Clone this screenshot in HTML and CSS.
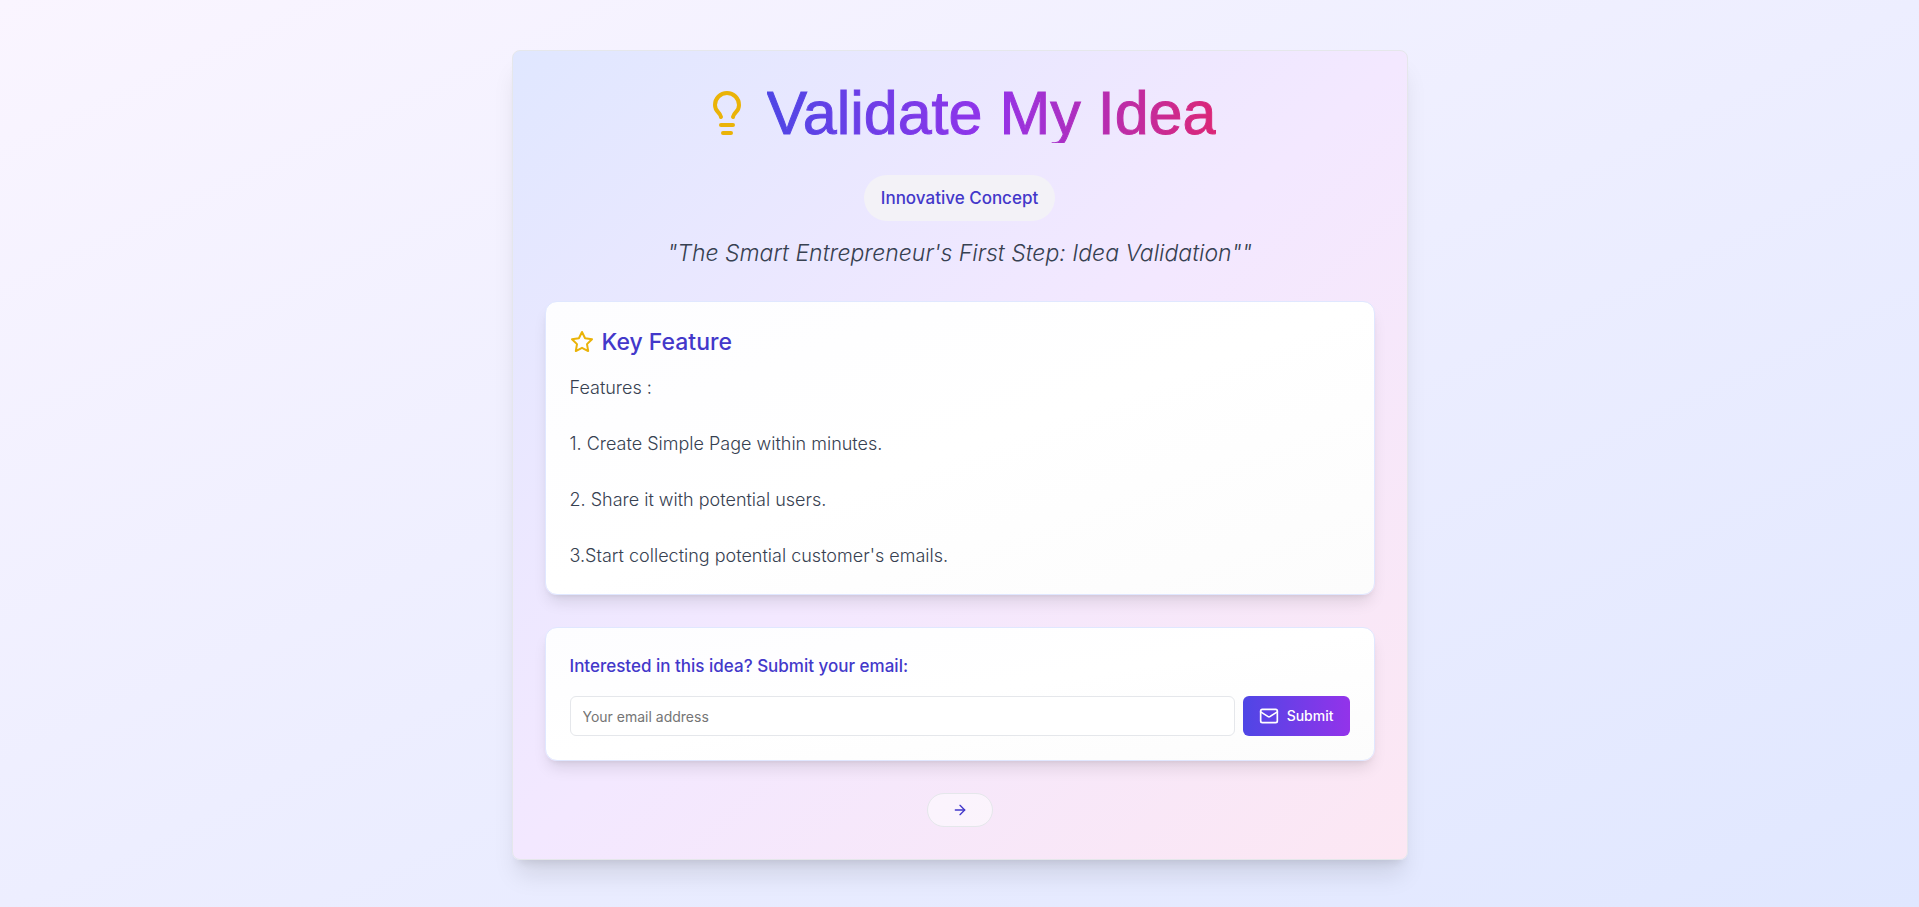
FILE: index.html
```
<!DOCTYPE html>
<html lang="en">
<head>
    <meta charset="UTF-8">
    <meta name="viewport" content="width=device-width, initial-scale=1.0">
    <title>Validate My Idea</title>
    <link rel="stylesheet" href="styles.css">
</head>
<body>
    <main class="card">
        <header class="card-header">
            <div class="title-row">
                <svg class="icon icon-bulb" viewBox="0 0 24 24" aria-hidden="true">
                    <path d="M15 14c.2-1 .7-1.7 1.5-2.5 1-.9 1.5-2.2 1.5-3.5A6 6 0 0 0 6 8c0 1 .2 2.2 1.5 3.5.7.7 1.3 1.5 1.5 2.5"/>
                    <path d="M9 18h6"/>
                    <path d="M10 22h4"/>
                </svg>
                <h1>Validate My Idea</h1>
            </div>
            <span class="badge">Innovative Concept</span>
            <p class="tagline">"The Smart Entrepreneur's First Step: Idea Validation""</p>
        </header>

        <section class="panel">
            <h2>
                <svg class="icon icon-star" viewBox="0 0 24 24" aria-hidden="true">
                    <polygon points="12 2 15.09 8.26 22 9.27 17 14.14 18.18 21.02 12 17.77 5.82 21.02 7 14.14 2 9.27 8.91 8.26 12 2"/>
                </svg>
                Key Feature
            </h2>
            <p class="features">Features :

1. Create Simple Page within minutes.

2. Share it with potential users.

3.Start collecting potential customer's emails.</p>
        </section>

        <form class="panel" id="email-form">
            <label for="email">Interested in this idea? Submit your email:</label>
            <div class="form-row">
                <input type="email" id="email" placeholder="Your email address" required>
                <button type="submit" class="submit-button">
                    <svg class="icon icon-mail" viewBox="0 0 24 24" aria-hidden="true">
                        <rect width="20" height="16" x="2" y="4" rx="2"/>
                        <path d="m22 7-8.97 5.7a1.94 1.94 0 0 1-2.06 0L2 7"/>
                    </svg>
                    Submit
                </button>
            </div>
        </form>

        <button type="button" class="next-button" aria-label="Next">
            <svg class="icon icon-arrow" viewBox="0 0 24 24" aria-hidden="true">
                <path d="M5 12h14"/>
                <path d="m12 5 7 7-7 7"/>
            </svg>
        </button>
    </main>
</body>
</html>
```
FILE: styles.css
```
* {
    box-sizing: border-box;
    margin: 0;
}

body {
    min-height: 100vh;
    padding: 50px 16px 47px;
    font-family: Inter, "Liberation Sans", sans-serif;
    background: linear-gradient(to bottom right, #faf5ff, #e0e7ff);
}

.card {
    display: flex;
    flex-direction: column;
    gap: 32px;
    max-width: 896px;
    margin: 0 auto;
    padding: 32px;
    border: 1px solid #e5e7eb;
    border-radius: 8px;
    background: linear-gradient(to bottom right, #e0e7ff, #f3e8ff, #fce7f3);
    box-shadow: 0 20px 25px -5px rgba(0, 0, 0, 0.1), 0 8px 10px -6px rgba(0, 0, 0, 0.1);
}

.card-header {
    display: flex;
    flex-direction: column;
    align-items: center;
    text-align: center;
}

.title-row {
    display: flex;
    align-items: center;
    gap: 16px;
    margin-bottom: 32px;
}

h1 {
    font-family: "Liberation Sans", Arial, sans-serif;
    font-size: 61px;
    line-height: 60px;
    font-weight: 400;
    color: transparent;
    background: linear-gradient(to right, #4f46e5, #9333ea, #db2777);
    -webkit-background-clip: text;
    background-clip: text;
    -webkit-text-stroke: 1px transparent;
}

.badge {
    margin-bottom: 16px;
    padding: 9px 17px;
    border-radius: 9999px;
    font-size: 17px;
    line-height: 28px;
    font-weight: 500;
    color: #4338ca;
    background-color: #f3f2f7;
}

.tagline {
    font-size: 23px;
    line-height: 32px;
    font-style: italic;
    font-weight: 300;
    color: #374151;
}

.icon {
    flex: none;
    fill: none;
    stroke: currentColor;
    stroke-width: 2;
    stroke-linecap: round;
    stroke-linejoin: round;
}

.icon-bulb {
    width: 48px;
    height: 48px;
    color: #eab308;
}

.icon-star {
    width: 24px;
    height: 24px;
    color: #eab308;
}

.icon-mail {
    width: 20px;
    height: 20px;
}

.icon-arrow {
    width: 16px;
    height: 16px;
}

.panel {
    padding: 24px;
    border: 1px solid #e0e7ff;
    border-radius: 12px;
    background: linear-gradient(to bottom right, #fdfdff, #ffffff, #fcfcfc);
    box-shadow: 0 10px 15px -3px rgba(0, 0, 0, 0.1), 0 4px 6px -4px rgba(0, 0, 0, 0.1);
}

h2 {
    display: flex;
    align-items: center;
    gap: 8px;
    margin-bottom: 16px;
    font-size: 23px;
    line-height: 32px;
    font-weight: 500;
    color: #4338ca;
}

.features {
    font-size: 18px;
    line-height: 28px;
    font-weight: 300;
    color: #374151;
    white-space: pre-line;
}

label {
    display: block;
    margin-bottom: 16px;
    font-size: 17px;
    line-height: 28px;
    font-weight: 500;
    color: #4338ca;
}

.form-row {
    display: flex;
    gap: 8px;
}

input {
    flex: 1;
    min-width: 0;
    height: 40px;
    padding: 8px 12px;
    border: 1px solid #e5e7eb;
    border-radius: 6px;
    font-family: inherit;
    font-size: 14px;
    background-color: #fff;
}

input::placeholder {
    color: #757575;
}

.submit-button {
    display: flex;
    align-items: center;
    gap: 8px;
    height: 40px;
    padding: 8px 16px;
    border: none;
    border-radius: 6px;
    font-family: inherit;
    font-size: 14px;
    line-height: 20px;
    font-weight: 500;
    color: #fff;
    background: linear-gradient(to right, #4f46e5, #9333ea);
    cursor: pointer;
}

.next-button {
    display: flex;
    align-items: center;
    align-self: center;
    padding: 8px 24px;
    border: 1px solid #e5e7eb;
    border-radius: 9999px;
    color: #4338ca;
    background-color: rgba(255, 255, 255, 0.5);
    cursor: pointer;
}
```
